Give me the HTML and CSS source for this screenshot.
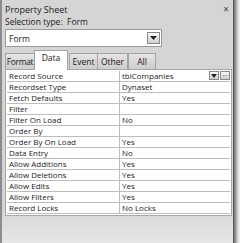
FILE: index.html
```html
<!DOCTYPE html>
<html>
<head>
<meta charset="utf-8">
<link rel="stylesheet" href="styles.css">
</head>
<body>
<div class="sheet">
  <div class="panel">
    <div class="titlebar">
      <span class="title">Property Sheet</span>
      <span class="close">×</span>
    </div>
    <div class="seltype">Selection type:&nbsp; Form</div>
    <div class="combo">
      <span class="combo-text">Form</span>
      <span class="dropbtn big"><svg width="7" height="4" viewBox="0 0 7 4"><path d="M0 0h7L3.5 4z" fill="#222"/></svg></span>
    </div>
    <div class="tabs">
      <span class="tab t1">Format</span>
      <span class="tab t2 active">Data</span>
      <span class="tab t3">Event</span>
      <span class="tab t4">Other</span>
      <span class="tab t5">All</span>
    </div>
    <div class="grid">
      <div class="row"><span class="k">Record Source</span><span class="v"><span class="vt">tblCompanies</span><span class="btns"><span class="dropbtn"><svg width="6" height="4" viewBox="0 0 6 4"><path d="M0 0h6L3 4z" fill="#222"/></svg></span><span class="dropbtn dots">···</span></span></span></div>
      <div class="row"><span class="k">Recordset Type</span><span class="v">Dynaset</span></div>
      <div class="row"><span class="k">Fetch Defaults</span><span class="v">Yes</span></div>
      <div class="row"><span class="k">Filter</span><span class="v"></span></div>
      <div class="row"><span class="k">Filter On Load</span><span class="v">No</span></div>
      <div class="row"><span class="k">Order By</span><span class="v"></span></div>
      <div class="row"><span class="k">Order By On Load</span><span class="v">Yes</span></div>
      <div class="row"><span class="k">Data Entry</span><span class="v">No</span></div>
      <div class="row"><span class="k">Allow Additions</span><span class="v">Yes</span></div>
      <div class="row"><span class="k">Allow Deletions</span><span class="v">Yes</span></div>
      <div class="row"><span class="k">Allow Edits</span><span class="v">Yes</span></div>
      <div class="row"><span class="k">Allow Filters</span><span class="v">Yes</span></div>
      <div class="row"><span class="k">Record Locks</span><span class="v">No Locks</span></div>
    </div>
  </div>
  <div class="edge"></div>
</div>
</body>
</html>
```
FILE: styles.css
```css
* { box-sizing: border-box; }
html, body { margin: 0; padding: 0; }
body {
  width: 240px; height: 243px; overflow: hidden;
  background: #f2f2f2;
  font-family: "Open Sans", "Liberation Sans", sans-serif;
  font-size: 8px;
  color: #1a1a1a;
}
.sheet {
  display: flex;
  height: 243px;
}
.panel {
  width: 233px;
  background: linear-gradient(#d5d5d5 85%, #e6e6e6);
  border-left: 2px solid #8c8c8c;
  padding: 0 0 0 3px;
  display: flex;
  flex-direction: column;
}
.edge {
  width: 7px;
  background: linear-gradient(to right, #4e4e4e, #8c8c8c 30%, #d8d8d8 70%, #f4f4f4);
}
.titlebar {
  display: flex;
  justify-content: space-between;
  align-items: center;
  height: 17px;
  padding-top: 1px;
}
.title { font-size: 9px; color: #222; }
.close { font-size: 10px; color: #444; margin-right: 4px; }
.seltype { font-size: 8.5px; height: 11px; line-height: 10px; color: #222; }
.combo {
  margin-top: 1px;
  width: 157px;
  height: 18px;
  background: #fff;
  border: 1px solid #9a9a9a;
  display: flex;
  align-items: center;
  justify-content: space-between;
  padding: 0 1px 0 3px;
  font-size: 8.5px;
}
.dropbtn {
  width: 10px; height: 9px;
  border: 1px solid #888;
  background: linear-gradient(#fafafa, #cfcfcf);
  display: flex; align-items: center; justify-content: center;
}
.dropbtn.big { width: 13px; height: 12px; }
.tabs {
  display: flex;
  margin-top: 2px;
  align-items: flex-end;
  height: 20px;
}
.tab {
  height: 16px;
  line-height: 15px;
  text-align: center;
  border: 1px solid #a3a3a3;
  border-bottom: none;
  background: linear-gradient(#e4e4e4, #cdcdcd);
  font-size: 8.5px;
  white-space: nowrap;
  overflow: hidden;
}
.t1 { width: 30px; letter-spacing: -0.35px; }
.t2 { width: 34px; }
.t3 { width: 29px; margin-left: 1px; }
.t4 { width: 31px; margin-left: -1px; }
.t5 { width: 28px; margin-left: 0; }
.tab.active {
  height: 20px;
  line-height: 14px;
  background: #fff;
  margin-left: -1px;
  margin-bottom: -1px;
  position: relative;
}
.grid {
  width: 227px;
  background: #fff;
  border: 1px solid #a8a8a8;
  padding: 1px;
}
.row {
  display: grid;
  grid-template-columns: 113px 1fr;
  height: 11px;
  line-height: 10px;
  border-bottom: 1px solid #bdbdbd;
}
.k { padding-left: 2px; border-right: 1px solid #bdbdbd; }
.v { padding-left: 2px; display: flex; justify-content: space-between; }
.btns { display: flex; gap: 1px; }
.btns .dropbtn { height: 9px; }
.dots { font-size: 7px; line-height: 6px; }
```
